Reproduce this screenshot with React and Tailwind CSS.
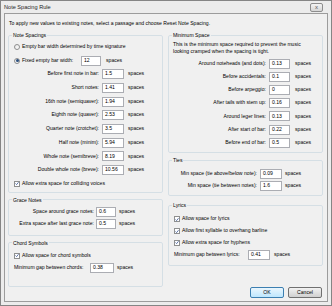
import React from "react";

const font = { fontFamily: '"Liberation Sans", Arial, sans-serif' };

function Radio({ checked }) {
  return (
    <span className="w-[6px] h-[6px] rounded-full border border-[#8e8f8f] bg-gradient-to-br from-[#e6e6e6] to-white flex items-center justify-center shrink-0">
      {checked && <span className="w-[3px] h-[3px] rounded-full bg-[#2b4f7e]" />}
    </span>
  );
}

function Check() {
  return (
    <span className="w-[6px] h-[6px] border border-[#8e8f8f] bg-white flex items-center justify-center shrink-0">
      <svg width="5" height="5" viewBox="0 0 5 5">
        <path d="M0.6 2.5 L2 3.9 L4.4 0.9" fill="none" stroke="#3b5795" strokeWidth="1" />
      </svg>
    </span>
  );
}

function Box({ value, w = "w-[22px]" }) {
  return (
    <span className={`${w} h-[10px] border border-[#abadb3] bg-white flex items-center px-[2px] shrink-0`}>
      {value}
    </span>
  );
}

function Row({ label, value, lw, gap = "ml-[2px]", sp = "ml-[4px]", h = "h-[13.7px]", iw }) {
  return (
    <div className={`flex items-center ${h}`}>
      <span className={`${lw} text-right pr-[1px] whitespace-nowrap`}>{label}</span>
      <span className={gap} />
      <Box value={value} w={iw} />
      <span className={sp}>spaces</span>
    </div>
  );
}

function Group({ title, className = "", children }) {
  return (
    <fieldset className={`border border-[#d5dfe5] rounded-[2px] ${className}`}>
      <legend className="ml-[3px] px-[1px] leading-[8px]">{title}</legend>
      {children}
    </fieldset>
  );
}

export default function App() {
  return (
    <div
      className="w-[332px] h-[306px] bg-[#ececec] border border-[#858585] flex flex-col text-[5.1px] text-black overflow-hidden"
      style={font}
    >
      {/* title bar */}
      <div className="h-[12px] flex items-center justify-between pl-[3px] pr-[8px] shrink-0">
        <span className="text-[5.6px] text-[#1e1e1e]">Note Spacing Rule</span>
        <span className="w-[13px] h-[9px] border border-[#8d8d8d] rounded-[2px] bg-gradient-to-b from-[#f4f4f4] to-[#d6d6d6] flex items-center justify-center text-[6px] leading-none text-[#555]">
          x
        </span>
      </div>

      <div className="flex-1 mx-[3px] mb-[3px] border border-[#9c9c9c] bg-[#f0f0f0] px-[3px] pt-[5px] flex flex-col">
        <div className="h-[8px] leading-[8px] pl-[1px]">
          To apply new values to existing notes, select a passage and choose Reset Note Spacing.
        </div>

        <div className="flex-1 flex gap-[5px] mt-[4px]">
          {/* left column */}
          <div className="w-[155px] flex flex-col">
            <Group title="Note Spacings" className="pb-[1px]">
              <div className="pt-[1px]">
                <div className="flex items-center h-[13.7px] pl-[5px] gap-[2px]">
                  <Radio />
                  <span>Empty bar width determined by time signature</span>
                </div>
                <div className="flex items-center h-[13.7px] pl-[5px]">
                  <Radio checked />
                  <span className="ml-[2px] w-[59px]">Fixed empty bar width:</span>
                  <Box value="12" w="w-[20px]" />
                  <span className="ml-[5px]">spaces</span>
                </div>
                <Row lw="w-[91px]" label="Before first note in bar:" value="1.5" />
                <Row lw="w-[91px]" label="Short notes:" value="1.41" />
                <Row lw="w-[91px]" label="16th note (semiquaver):" value="1.94" />
                <Row lw="w-[91px]" label="Eighth note (quaver):" value="2.53" />
                <Row lw="w-[91px]" label="Quarter note (crotchet):" value="3.5" />
                <Row lw="w-[91px]" label="Half note (minim):" value="5.94" />
                <Row lw="w-[91px]" label="Whole note (semibreve):" value="8.19" />
                <Row lw="w-[91px]" label="Double whole note (breve):" value="10.56" />
                <div className="flex items-center h-[13.7px] pl-[5px] gap-[2px]">
                  <Check />
                  <span>Allow extra space for colliding voices</span>
                </div>
              </div>
            </Group>

            <Group title="Grace Notes" className="mt-[3px] pb-[5px]">
              <div className="pt-[2px]">
                <Row lw="w-[86px]" gap="ml-[1px]" sp="ml-[3px]" h="h-[12px]" iw="w-[20px]" label="Space around grace notes:" value="0.6" />
                <Row lw="w-[86px]" gap="ml-[1px]" sp="ml-[3px]" h="h-[12px]" iw="w-[20px]" label="Extra space after last grace note:" value="0.5" />
              </div>
            </Group>

            <Group title="Chord Symbols" className="mt-[3px] pb-[12px]">
              <div className="pt-[3px]">
                <div className="flex items-center h-[12px] pl-[5px] gap-[2px]">
                  <Check />
                  <span>Allow space for chord symbols</span>
                </div>
                <div className="flex items-center h-[12px] pl-[5px]">
                  <span className="w-[76px] whitespace-nowrap">Minimum gap between chords:</span>
                  <Box value="0.38" w="w-[24px]" />
                  <span className="ml-[3px]">spaces</span>
                </div>
              </div>
            </Group>
          </div>

          {/* right column */}
          <div className="w-[155px] flex flex-col">
            <Group title="Minimum Space" className="pb-[3px]">
              <div className="pl-[4px] pt-[2px] leading-[7px]">
                This is the minimum space required to prevent the music
                <br />
                looking cramped when the spacing is tight.
              </div>
              <div className="pt-[2px]">
                <Row lw="w-[98px]" sp="ml-[5px]" h="h-[13.2px]" iw="w-[21px]" label="Around noteheads (and dots):" value="0.13" />
                <Row lw="w-[98px]" sp="ml-[5px]" h="h-[13.2px]" iw="w-[21px]" label="Before accidentals:" value="0.1" />
                <Row lw="w-[98px]" sp="ml-[5px]" h="h-[13.2px]" iw="w-[21px]" label="Before arpeggio:" value="0" />
                <Row lw="w-[98px]" sp="ml-[5px]" h="h-[13.2px]" iw="w-[21px]" label="After tails with stem up:" value="0.16" />
                <Row lw="w-[98px]" sp="ml-[5px]" h="h-[13.2px]" iw="w-[21px]" label="Around leger lines:" value="0.13" />
                <Row lw="w-[98px]" sp="ml-[5px]" h="h-[13.2px]" iw="w-[21px]" label="After start of bar:" value="0.22" />
                <Row lw="w-[98px]" sp="ml-[5px]" h="h-[13.2px]" iw="w-[21px]" label="Before end of bar:" value="0.5" />
              </div>
            </Group>

            <Group title="Ties" className="mt-[3px] pb-[3px]">
              <div className="pt-[4px]">
                <Row lw="w-[89px]" sp="ml-[3px]" h="h-[12px]" label="Min space (tie above/below note):" value="0.09" />
                <Row lw="w-[89px]" sp="ml-[3px]" h="h-[12px]" label="Min space (tie between notes):" value="1.6" />
              </div>
            </Group>

            <Group title="Lyrics" className="mt-[5px] pb-[4px]">
              <div className="pt-[4px]">
                <div className="flex items-center h-[11.8px] pl-[5px] gap-[2px]">
                  <Check />
                  <span>Allow space for lyrics</span>
                </div>
                <div className="flex items-center h-[11.8px] pl-[5px] gap-[2px]">
                  <Check />
                  <span>Allow first syllable to overhang barline</span>
                </div>
                <div className="flex items-center h-[11.8px] pl-[5px] gap-[2px]">
                  <Check />
                  <span>Allow extra space for hyphens</span>
                </div>
                <div className="flex items-center h-[12.5px] pl-[5px]">
                  <span className="w-[74px] whitespace-nowrap">Minimum gap between lyrics:</span>
                  <Box value="0.41" />
                  <span className="ml-[4px]">spaces</span>
                </div>
              </div>
            </Group>

            <div className="flex justify-end gap-[4px] mt-auto mb-[3px] pr-[1px]">
              <button className="w-[34px] h-[11px] rounded-[2px] border border-[#3c7fb1] bg-gradient-to-b from-[#eaf6fd] to-[#bee6fd] text-[5.1px] leading-none flex items-center justify-center">
                OK
              </button>
              <button className="w-[34px] h-[11px] rounded-[2px] border border-[#707070] bg-gradient-to-b from-[#f2f2f2] to-[#d0d0d0] text-[5.1px] leading-none flex items-center justify-center">
                Cancel
              </button>
            </div>
          </div>
        </div>
      </div>
    </div>
  );
}
